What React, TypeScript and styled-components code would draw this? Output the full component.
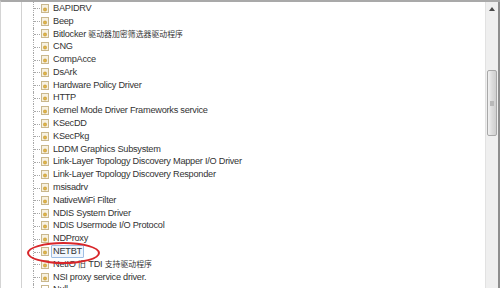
import * as React from "react";
import styled, { createGlobalStyle } from "styled-components";

const GlobalStyle = createGlobalStyle`
  html, body {
    margin: 0;
    padding: 0;
    background: #ffffff;
    overflow: hidden;
  }
  body {
    font-family: "Liberation Sans", "Noto Sans CJK SC", sans-serif;
  }
`;

const services: string[] = [
  "BAPIDRV",
  "Beep",
  "Bitlocker 驱动器加密筛选器驱动程序",
  "CNG",
  "CompAcce",
  "DsArk",
  "Hardware Policy Driver",
  "HTTP",
  "Kernel Mode Driver Frameworks service",
  "KSecDD",
  "KSecPkg",
  "LDDM Graphics Subsystem",
  "Link-Layer Topology Discovery Mapper I/O Driver",
  "Link-Layer Topology Discovery Responder",
  "msisadrv",
  "NativeWiFi Filter",
  "NDIS System Driver",
  "NDIS Usermode I/O Protocol",
  "NDProxy",
  "NETBT",
  "NetIO 旧 TDI 支持驱动程序",
  "NSI proxy service driver.",
  "Null",
];

const Window = styled.div`
  width: 500px;
  height: 288px;
  display: flex;
  box-sizing: border-box;
  border-top: 2px solid #a9a9a9;
  border-left: 1px solid #d4d4d4;
  background: #fff;
  overflow: hidden;
`;

const Gutter = styled.div`
  width: 20px;
  flex-shrink: 0;
  border-right: 1px solid #d2d2d2;
`;

const TreeArea = styled.div`
  flex: 1;
  position: relative;
  overflow: hidden;
`;

const List = styled.ul`
  list-style: none;
  margin: 0;
  padding: 0;
`;

const Row = styled.li`
  position: relative;
  height: 12.8px;
  display: flex;
  align-items: center;
  padding-left: 19px;
  gap: 2px;
  font-size: 9.2px;
  letter-spacing: -0.25px;
  color: #333333;
  white-space: nowrap;

  &::before {
    content: "";
    position: absolute;
    left: 11px;
    top: 0;
    bottom: 0;
    border-left: 1px dotted #a8a8a8;
  }

  &::after {
    content: "";
    position: absolute;
    left: 12px;
    top: 50%;
    width: 6px;
    border-top: 1px dotted #a8a8a8;
  }
`;

const Label = styled.span<{ $selected?: boolean }>`
  padding: 0 1px;
  line-height: 11px;
  border: 1px solid ${(p) => (p.$selected ? "#9dbde3" : "transparent")};
  background: ${(p) => (p.$selected ? "#f1f6fd" : "transparent")};
  border-radius: 1px;
`;

const Cjk = styled.span`
  font-size: 7.9px;
  letter-spacing: 0;
`;

const Circle = styled.div`
  position: absolute;
  left: 5px;
  top: 240px;
  width: 69px;
  height: 18px;
  border: 2.5px solid #d8262a;
  border-radius: 50%;
  pointer-events: none;
`;

const Scrollbar = styled.div`
  width: 12px;
  flex-shrink: 0;
  background: #efefef;
  border-left: 1px solid #e2e2e2;
  border-right: 2px solid #8e8e8e;
  display: flex;
  flex-direction: column;
  align-items: center;
`;

const ArrowButton = styled.div`
  height: 14px;
  width: 100%;
  display: flex;
  align-items: center;
  justify-content: center;
`;

const Track = styled.div`
  width: 100%;
  padding-top: 54px;
`;

const Thumb = styled.div`
  height: 64px;
  margin: 0 1px;
  border: 1px solid #a8a8a8;
  border-radius: 2px;
  background: linear-gradient(to right, #f2f2f2, #dcdcdc 50%, #cfcfcf);
  display: flex;
  align-items: center;
  justify-content: center;
`;

const Grip = styled.div`
  width: 4px;
  height: 5px;
  background: #b8b8b8;
`;

const ServiceIcon: React.FC<{ blank?: boolean }> = ({ blank }) => (
  <svg width="8" height="9" viewBox="0 0 8 9">
    <rect x="0.5" y="0.5" width="7" height="8" fill={blank ? "#fff" : "#f7f1e0"} stroke="#c9b88e" />
    {!blank && <rect x="2.5" y="4" width="3" height="3" rx="1" fill="#e0b548" stroke="#b98d2c" strokeWidth="0.5" />}
  </svg>
);

// split latin and chinese runs so the CJK glyphs get their own size
function renderName(name: string) {
  return name.split(/([\u4e00-\u9fff]+)/).map((part, i) =>
    /[\u4e00-\u9fff]/.test(part) ? <Cjk key={i}>{part}</Cjk> : part
  );
}

export default function App() {
  return (
    <>
      <GlobalStyle />
      <Window>
        <Gutter />
        <TreeArea>
          <List>
            {services.map((name) => (
              <Row key={name}>
                <ServiceIcon blank={name === "Null"} />
                <Label $selected={name === "NETBT"}>{renderName(name)}</Label>
              </Row>
            ))}
          </List>
          <Circle />
        </TreeArea>
        <Scrollbar>
          <ArrowButton>
            <svg width="6" height="4" viewBox="0 0 6 4">
              <path d="M0 4 L3 0 L6 4 Z" fill="#4a4a4a" />
            </svg>
          </ArrowButton>
          <Track>
            <Thumb>
              <Grip />
            </Thumb>
          </Track>
        </Scrollbar>
      </Window>
    </>
  );
}
